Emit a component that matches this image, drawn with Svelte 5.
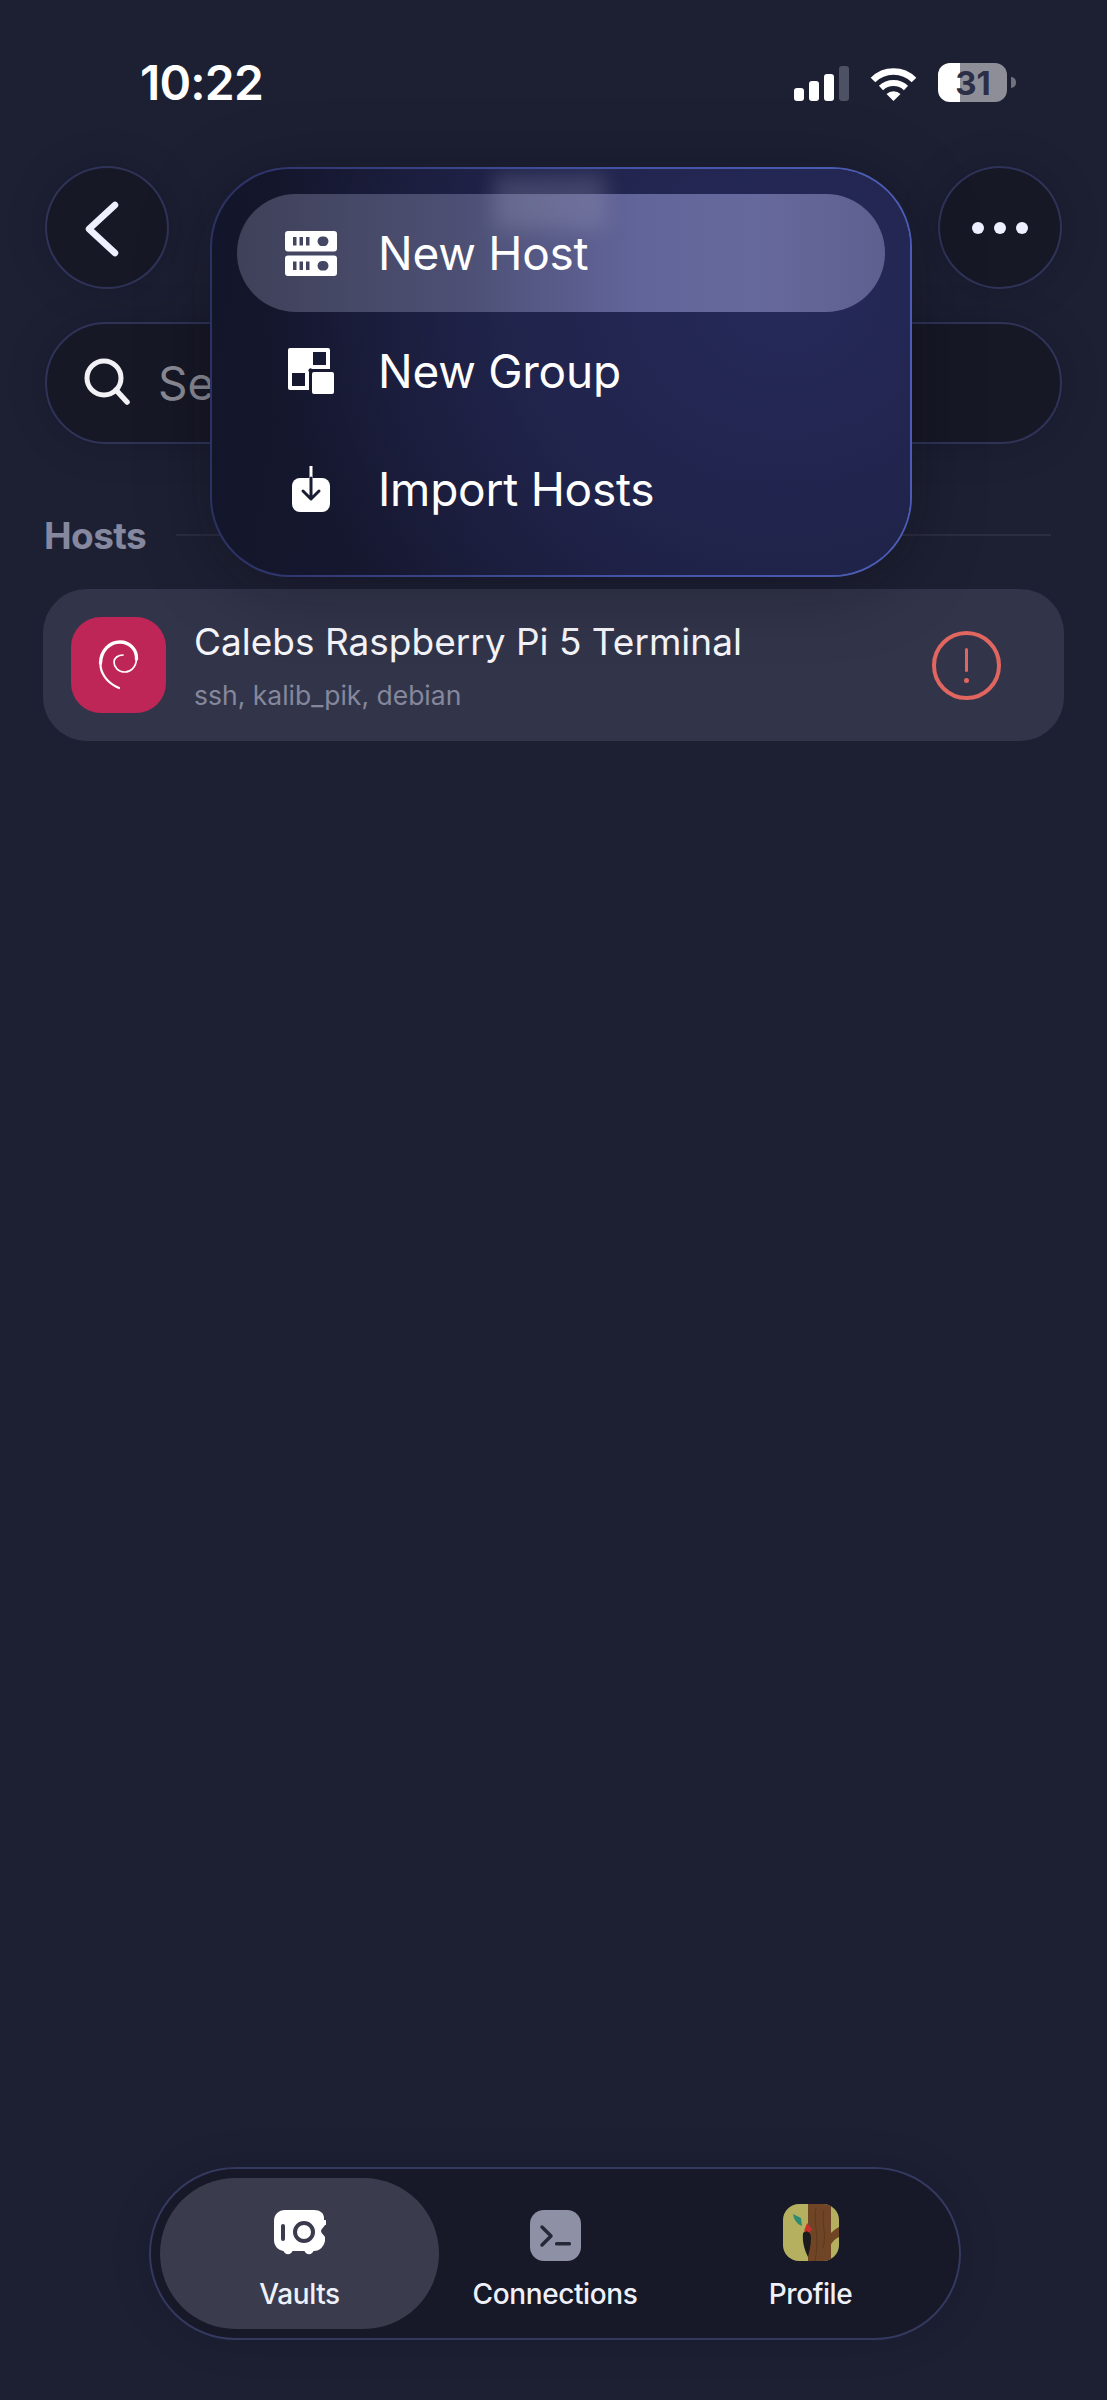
<script lang="ts">
  const menu = [
    { id: 'host', label: 'New Host' },
    { id: 'group', label: 'New Group' },
    { id: 'import', label: 'Import Hosts' },
  ];
</script>

<div class="page">
  <div class="status">
    <span class="time">10:22</span>
    <div class="indicators">
      <div class="signal">
        <i class="b1"></i><i class="b2"></i><i class="b3"></i><i class="b4"></i>
      </div>
      <svg class="wifi" width="47" height="34" viewBox="0 0 47 34" fill="none">
        <path d="M3 13A29 29 0 0 1 44 13" stroke="#fff" stroke-width="6.5" />
        <path d="M11 21A18 18 0 0 1 36 21" stroke="#fff" stroke-width="6" />
        <path d="M16.5 27A10 10 0 0 1 30.5 27L23.5 34Z" fill="#fff" />
      </svg>
      <div class="battery">
        <div class="cell"><span>31</span></div>
        <div class="tip"></div>
      </div>
    </div>
  </div>

  <div class="head">
    <button class="round" aria-label="Back">
      <svg width="124" height="123" viewBox="0 0 124 123" fill="none">
        <path d="M70 39L44 63L70 87" stroke="#eef0ff" stroke-width="6.5" stroke-linecap="round" stroke-linejoin="round" />
      </svg>
    </button>
    <button class="round dots" aria-label="More"><i></i><i></i><i></i></button>
  </div>

  <div class="search">
    <svg width="50" height="50" viewBox="0 0 50 50" fill="none">
      <circle cx="21" cy="20" r="17" stroke="#f2f2f6" stroke-width="5" />
      <path d="M33 32L44 44" stroke="#f2f2f6" stroke-width="5.5" stroke-linecap="round" />
    </svg>
    <span>Search</span>
  </div>

  <div class="section">
    <span>Hosts</span>
    <div class="rule"></div>
  </div>

  <div class="host">
    <div class="tile">
      <svg width="95" height="96" viewBox="0 0 95 96" fill="none" stroke="#fff" stroke-linecap="round">
        <path d="M48 71C36 66 29 56 29.5 46" stroke-width="2.2" />
        <path d="M29.5 46C30 33 39 25 49 25C59 25 66 33 65.5 42" stroke-width="3.4" />
        <path d="M65.5 42C65 51 59 55 54 55C47 55 43 50 43 45C43 41 47 38 52 38" stroke-width="1.7" />
      </svg>
    </div>
    <div class="info">
      <div class="name">Calebs Raspberry Pi 5 Terminal</div>
      <div class="meta">ssh, kalib_pik, debian</div>
    </div>
    <div class="warn"><span></span><i></i></div>
  </div>

  <nav class="tabs">
    <div class="tab active">
      <svg width="52" height="46" viewBox="0 0 52 46">
        <path fill="#fff" fill-rule="evenodd" d="M11 0H40C46 0 50 3 50 8V10A2.500 2.500 0 0 1 51 15C49 18 47 19 47 21C47 23 49 24 51 27V31C50 36 46 41 40 41H39.500A4.800 4.800 0 0 1 30.500 41H18.500A4.800 4.800 0 0 1 9.500 41C4 40 0 36 0 30V11C0 4 5 0 11 0ZM9 14A2 2 0 0 0 7 16V29A2 2 0 0 0 11 29V16A2 2 0 0 0 9 14ZM30 11A11 11 0 1 0 30 33A11 11 0 1 0 30 11ZM30 15A7 7 0 1 1 30 29A7 7 0 1 1 30 15Z" />
      </svg>
      <span>Vaults</span>
    </div>
    <div class="tab">
      <svg width="51" height="51" viewBox="0 0 51 51">
        <rect width="51" height="51" rx="14" fill="#8e90a6" />
        <path d="M12 17L21 26L12 35" fill="none" stroke="#262838" stroke-width="3.500" stroke-linecap="round" stroke-linejoin="round" />
        <rect x="25" y="32" width="16" height="3.500" rx="1.500" fill="#262838" />
      </svg>
      <span>Connections</span>
    </div>
    <div class="tab">
      <svg width="56" height="57" viewBox="0 0 56 57">
        <defs><clipPath id="avatar"><rect width="56" height="57" rx="16" /></clipPath></defs>
        <g clip-path="url(#avatar)">
          <rect width="56" height="57" fill="#b5b05f" />
          <rect x="25" width="23" height="57" fill="#6f4526" />
          <path d="M45 33C48 28 52 25 56 23V33C51 35 48 40 46 44Z" fill="#6f4526" />
          <path d="M33 4C30 18 37 34 32 57M41 6C38 18 44 30 40 44" stroke="#5d3a1f" stroke-width="1" fill="none" />
          <path d="M10 10L18 14L19 22C14 20 11 16 10 10Z" fill="#2f8a72" />
          <path d="M24 19L29 25L25 31L21 27Z" fill="#c9302c" />
          <path d="M20 29C24 26 28 28 28 34C28 42 26 48 25 53C22 47 19 38 20 29Z" fill="#1b1a1d" />
        </g>
      </svg>
      <span>Profile</span>
    </div>
  </nav>

  <div class="menu">
    {#each menu as item, i}
      <div class="item" class:on={i === 0}>
        <div class="ico">
          {#if item.id === 'host'}
            <svg width="52" height="45" viewBox="0 0 52 45">
              <g fill="#fff" fill-rule="evenodd">
                <path d="M3 0H49A3 3 0 0 1 52 3V17.500A3 3 0 0 1 49 20.500H3A3 3 0 0 1 0 17.500V3A3 3 0 0 1 3 0ZM8 6V14.500H11.500V6ZM14.500 6V14.500H18V6ZM21 6V14.500H24.500V6ZM38 5.500A4.800 4.800 0 1 0 38 15A4.800 4.800 0 1 0 38 5.500Z" />
                <path d="M3 24.500H49A3 3 0 0 1 52 27.500V42A3 3 0 0 1 49 45H3A3 3 0 0 1 0 42V27.500A3 3 0 0 1 3 24.500ZM8 30.500V39H11.500V30.500ZM14.500 30.500V39H18V30.500ZM21 30.500V39H24.500V30.500ZM38 30A4.800 4.800 0 1 0 38 39.500A4.800 4.800 0 1 0 38 30Z" />
              </g>
            </svg>
          {:else if item.id === 'group'}
            <svg width="46" height="46" viewBox="0 0 46 46">
              <path fill="#fff" fill-rule="evenodd" d="M2 0H40A2 2 0 0 1 42 2V21H24A2 2 0 0 0 21 24V42H2A2 2 0 0 1 0 40V2A2 2 0 0 1 2 0ZM25 4V17H38V4ZM4 25V38H17V25Z" />
              <rect x="24" y="24" width="22" height="22" rx="2" fill="#fff" />
            </svg>
          {:else}
            <svg width="38" height="46" viewBox="0 0 38 46" fill="none">
              <rect y="12" width="38" height="34" rx="8" fill="#fff" />
              <path d="M19 0V12" stroke="#fff" stroke-width="3" />
              <path d="M19 12V32M11 25L19 33L27 25" stroke="#1a1c34" stroke-width="3" stroke-linecap="round" stroke-linejoin="round" />
            </svg>
          {/if}
        </div>
        <span>{item.label}</span>
      </div>
    {/each}
    <div class="glow"></div>
  </div>
</div>

<style>
  :global(body) {
    margin: 0;
    background: #1d2033;
  }
  .page {
    position: relative;
    box-sizing: border-box;
    width: 1107px;
    height: 2400px;
    padding: 0 45px 60px;
    display: flex;
    flex-direction: column;
    overflow: hidden;
    background: #1d2033;
    color: #fff;
    font-family: Inter, 'Liberation Sans', sans-serif;
  }
  .status {
    display: flex;
    align-items: center;
    justify-content: space-between;
    height: 39px;
    margin: 63px 0 64px;
    padding-left: 95px;
  }
  .time {
    font-size: 48px;
    font-weight: 600;
    letter-spacing: -0.8px;
    line-height: 1;
  }
  .indicators {
    display: flex;
    align-items: center;
    gap: 21px;
    margin-right: 46px;
  }
  .signal {
    display: flex;
    align-items: flex-end;
    gap: 5px;
    height: 35px;
    margin-top: 2px;
  }
  .signal i {
    display: block;
    width: 10px;
    background: #fff;
    border-radius: 3px;
  }
  .b1 { height: 13px; }
  .b2 { height: 20px; }
  .b3 { height: 27px; }
  .signal .b4 { height: 35px; background: #4e5063; }
  .wifi {
    margin-top: 2px;
  }
  .battery {
    display: flex;
    align-items: center;
    gap: 4px;
  }
  .cell {
    width: 69px;
    height: 39px;
    border-radius: 12px;
    background: linear-gradient(90deg, #fff 32%, #8e8e98 32%);
    display: flex;
    align-items: center;
    justify-content: center;
    color: #2c2e45;
    font-size: 33px;
    font-weight: 700;
  }
  .cell span {
    margin-left: 1px;
  }
  .tip {
    width: 5px;
    height: 11px;
    background: #70717d;
    border-radius: 0 6px 6px 0;
  }
  .head {
    display: flex;
    justify-content: space-between;
    margin-bottom: 33px;
  }
  .round {
    box-sizing: border-box;
    width: 124px;
    height: 123px;
    padding: 0;
    border-radius: 50%;
    border: 2px solid #2f3358;
    background: #171826;
    display: flex;
    align-items: center;
    justify-content: center;
    box-shadow: 0 0 40px rgba(10, 10, 20, 0.18);
  }
  .round svg {
    flex: none;
    margin: -2px;
  }
  .dots {
    gap: 10px;
  }
  .dots i {
    width: 12px;
    height: 12px;
    border-radius: 50%;
    background: #eef0ff;
  }
  .search {
    box-sizing: border-box;
    height: 122px;
    border-radius: 61px;
    border: 2px solid #2f3358;
    background: #171826;
    display: flex;
    align-items: center;
    gap: 25px;
    padding-left: 36px;
    box-shadow: 0 0 40px rgba(10, 10, 20, 0.18);
  }
  .search span {
    font-size: 46px;
    color: #8b8c96;
  }
  .section {
    display: flex;
    align-items: center;
    gap: 30px;
    height: 44px;
    margin: 69px 11px 32px -1px;
  }
  .section span {
    font-size: 37px;
    font-weight: 700;
    letter-spacing: -0.6px;
    color: #85889e;
  }
  .rule {
    flex: 1;
    height: 2px;
    background: #2b2d40;
  }
  .host {
    box-sizing: border-box;
    height: 152px;
    margin: 0 -2px;
    padding: 0 42px 0 28px;
    border-radius: 44px;
    background: #32354a;
    display: flex;
    align-items: center;
    gap: 28px;
  }
  .tile {
    flex: none;
    width: 95px;
    height: 96px;
    border-radius: 30px;
    background: #bf2658;
  }
  .tile svg {
    display: block;
  }
  .info {
    flex: 1;
    display: flex;
    flex-direction: column;
    gap: 15px;
  }
  .name {
    font-size: 37px;
    line-height: 44px;
    color: #f6f6fa;
  }
  .meta {
    font-size: 26.5px;
    line-height: 32px;
    color: #85879c;
  }
  .warn {
    flex: none;
    box-sizing: border-box;
    width: 69px;
    height: 69px;
    margin-right: 21px;
    border: 4px solid #e0665f;
    border-radius: 50%;
    display: flex;
    flex-direction: column;
    align-items: center;
    justify-content: center;
    gap: 6px;
  }
  .warn span {
    width: 3px;
    height: 24px;
    background: #e0665f;
    border-radius: 2px;
  }
  .warn i {
    width: 5px;
    height: 5px;
    background: #e0665f;
    border-radius: 50%;
  }
  .tabs {
    box-sizing: border-box;
    align-self: center;
    margin: auto 0 0 3px;
    width: 812px;
    height: 173px;
    padding: 9px;
    border: 2px solid #34395f;
    border-radius: 87px;
    background: #171828;
    display: grid;
    grid-template-columns: 279px 232px 279px;
    box-shadow: 0 0 40px rgba(10, 10, 20, 0.15);
  }
  .tab {
    height: 151px;
    display: flex;
    flex-direction: column;
    align-items: center;
    justify-content: flex-end;
    gap: 16px;
    padding-bottom: 18px;
    box-sizing: border-box;
    border-radius: 76px;
    font-size: 28px;
    font-weight: 500;
    letter-spacing: -0.4px;
    color: #eef0fa;
  }
  .tab span {
    line-height: 34px;
  }
  .tab.active {
    background: #3a3b4d;
  }
  .tab.active svg {
    margin-bottom: 5px;
  }
  .menu {
    position: absolute;
    left: 210px;
    top: 167px;
    box-sizing: border-box;
    width: 702px;
    height: 410px;
    padding: 25px;
    border: 2px solid transparent;
    border-radius: 80px;
    background:
      radial-gradient(ellipse 75% 120% at 82% 30%, #262a5a 0%, #20234a 55%, rgba(28, 30, 62, 0) 100%) padding-box,
      linear-gradient(100deg, #13152a 0%, #181a34 60%, #1c1f40 100%) padding-box,
      linear-gradient(90deg, #2c3163 0%, #4454a8 60%, #4c5cb4 100%) border-box;
    box-shadow: 0 10px 70px rgba(8, 8, 16, 0.35);
    overflow: hidden;
  }
  .glow {
    position: absolute;
    left: 282px;
    top: 6px;
    width: 112px;
    height: 54px;
    background: rgba(170, 172, 200, 0.24);
    filter: blur(10px);
  }
  .item {
    position: relative;
    height: 118px;
    display: flex;
    align-items: center;
    border-radius: 60px;
    font-size: 46px;
    letter-spacing: -0.25px;
    color: #fff;
  }
  .item.on {
    background: linear-gradient(90deg, #3f4159 0%, #4d5074 35%, #62659a 62%, #66699b 80%, #5d608f 100%);
  }
  .ico {
    flex: none;
    width: 52px;
    margin: 0 41px 0 48px;
    display: flex;
    justify-content: center;
  }
  .ico svg {
    display: block;
  }
</style>
